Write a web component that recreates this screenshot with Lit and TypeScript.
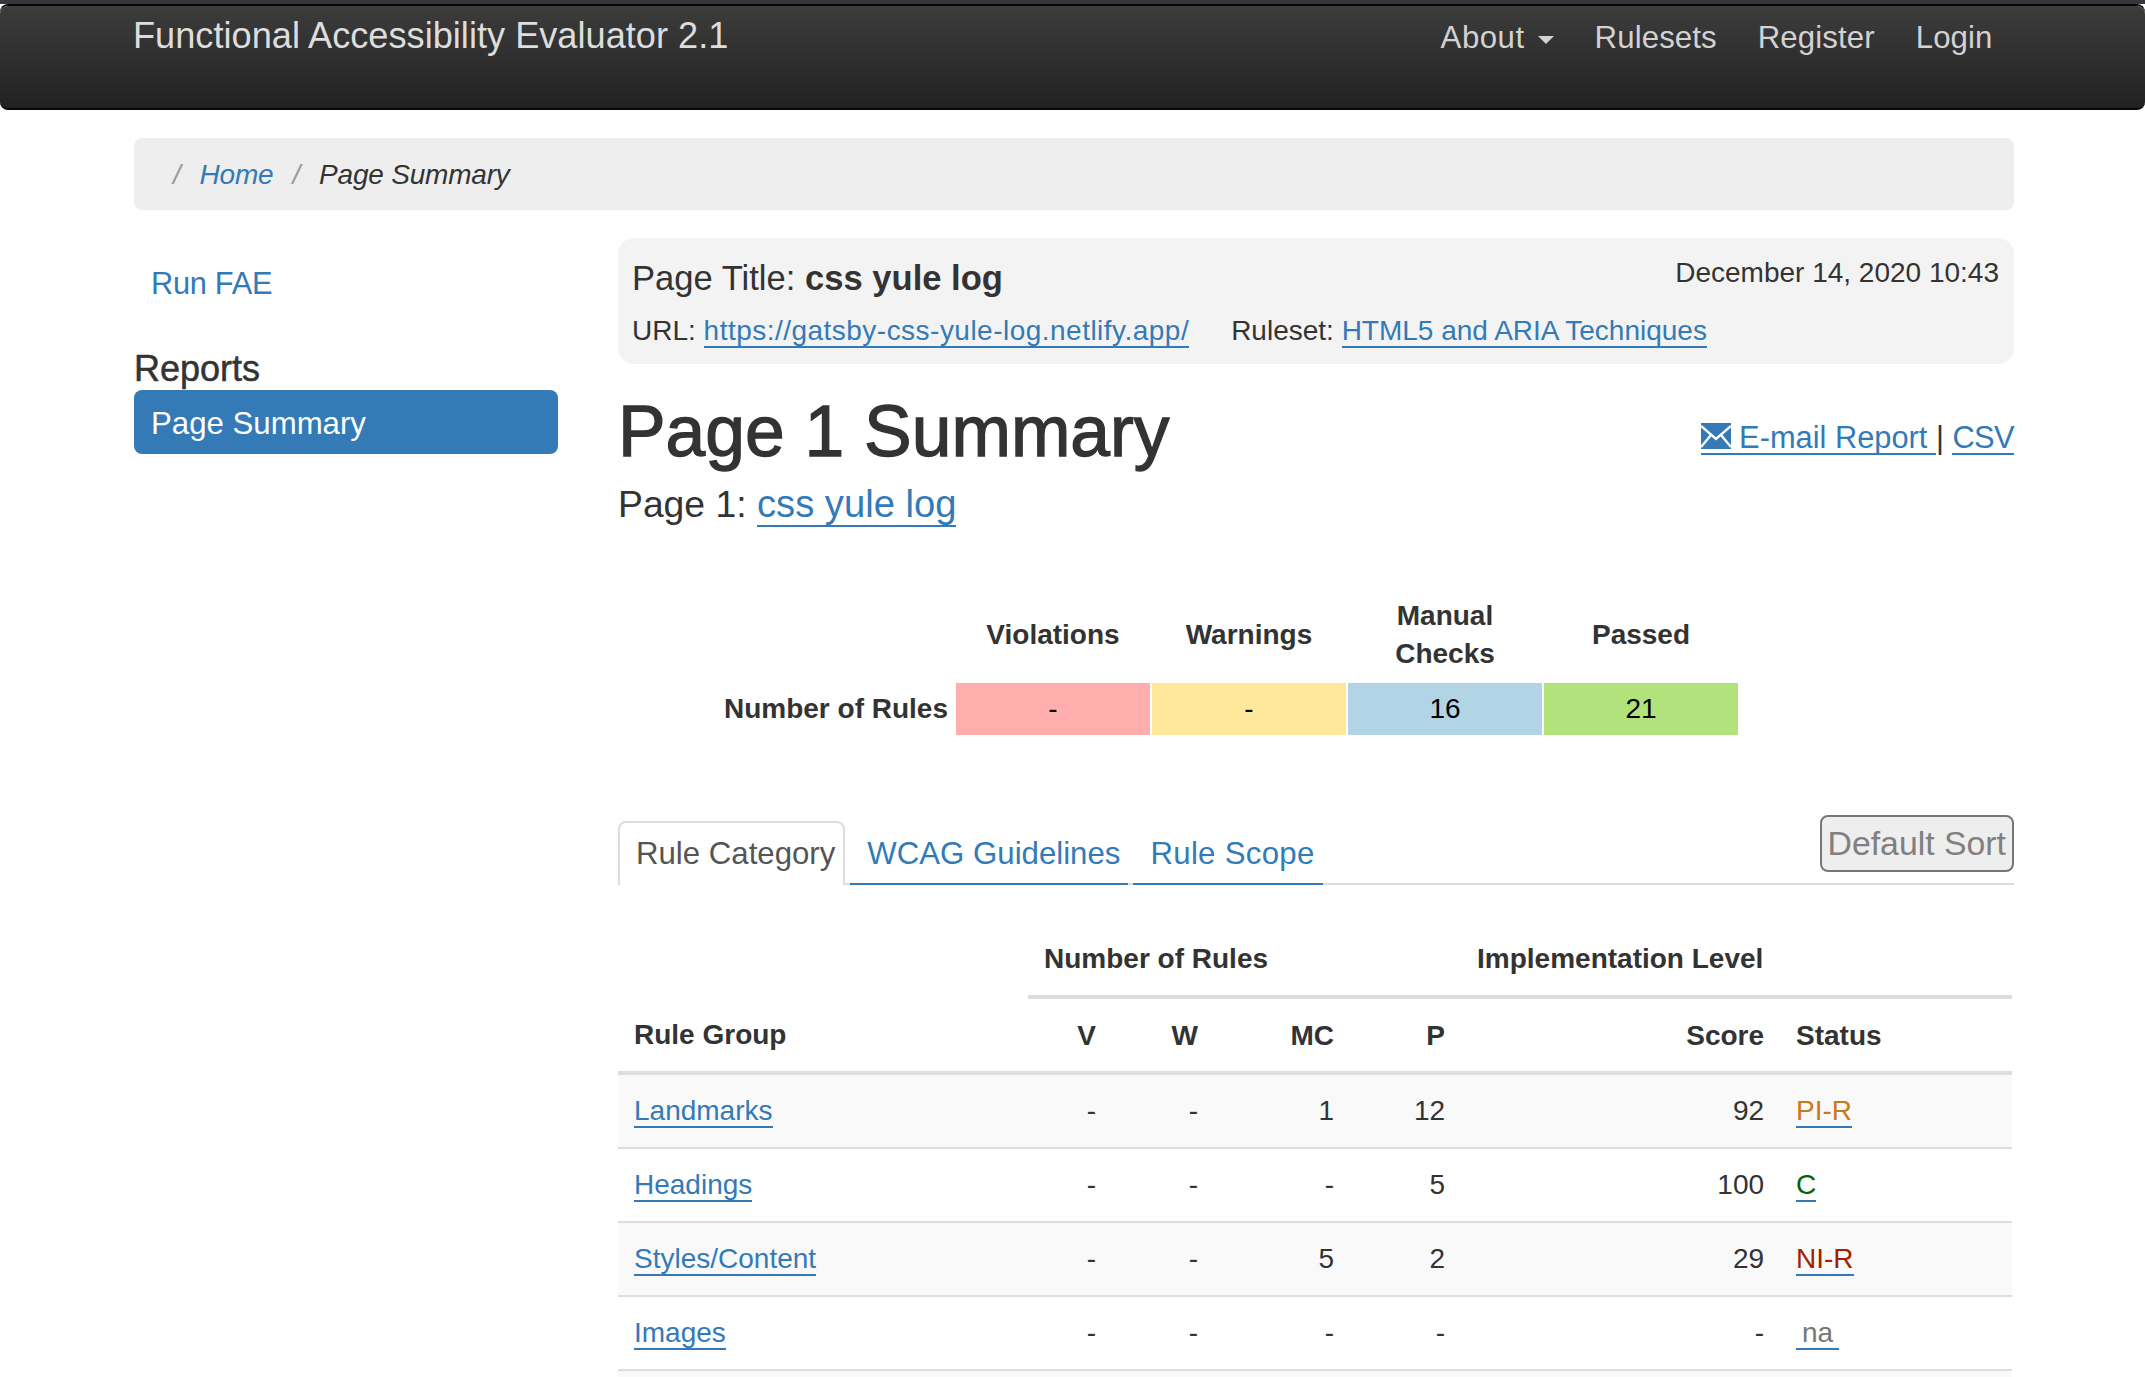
import { LitElement, html, css } from "lit";
import { customElement } from "lit/decorators.js";

const rows = [
  { name: "Landmarks", v: "-", w: "-", mc: "1", p: "12", score: "92", status: "PI-R", cls: "pi" },
  { name: "Headings", v: "-", w: "-", mc: "-", p: "5", score: "100", status: "C", cls: "c" },
  { name: "Styles/Content", v: "-", w: "-", mc: "5", p: "2", score: "29", status: "NI-R", cls: "ni" },
  { name: "Images", v: "-", w: "-", mc: "-", p: "-", score: "-", status: "na", cls: "na" },
];

@customElement("app-root")
export class AppRoot extends LitElement {
  static styles = css`
    :host {
      display: block;
      height: 1377px;
      overflow: hidden;
      background: #fff;
      font-family: "Liberation Sans", Arial, sans-serif;
      font-size: 28px;
      line-height: 40px;
      color: #333;
    }
    a { color: #337ab7; text-decoration: none; }
    .lnk { border-bottom: 2px solid #337ab7; }
    .strip { height: 4px; background: #34373c; }
    .navbar {
      height: 104px;
      box-sizing: border-box;
      margin-top: 2px;
      padding: 0 132px 0 133px;
      border-radius: 8px;
      border-bottom: 2px solid #080808;
      background: linear-gradient(#3c3c3c, #222);
      display: flex;
      align-items: flex-start;
      box-shadow: 0 -2px 0 #080808;
    }
    .brand { font-size: 36.2px; line-height: 40px; margin-top: 10px; color: #ddd; }
    .nav { margin-left: auto; display: flex; margin-top: 12px; }
    .nav a { color: #d2d2d2; font-size: 31.2px; line-height: 40px; padding: 0 20.5px; display: flex; align-items: center; letter-spacing: 0.1px; }
    .nav a.about { letter-spacing: 0.5px; }
    .caret {
      width: 0; height: 0; margin-left: 13px; margin-top: 4px;
      border-left: 8px solid transparent;
      border-right: 8px solid transparent;
      border-top: 8px solid #d2d2d2;
    }
    .page { padding: 28px 131px 0 134px; }
    .crumbs {
      height: 72px;
      border-radius: 8px;
      background: #eee;
      padding: 2px 0 0 20px;
      box-sizing: border-box;
      display: flex;
      align-items: center;
      font-style: italic;
      letter-spacing: -0.2px;
    }
    .crumbs span.item::before { content: "/"; color: #999; padding: 0 19px; }
    .columns { display: flex; margin-top: 28px; }
    .side { width: 424px; margin-right: 60px; flex: none; }
    .run { display: block; font-size: 30.8px; padding: 0 17px; margin-top: 26px; line-height: 40px; letter-spacing: -0.3px; }
    .side h2 {
      font-size: 36px; font-weight: 400; line-height: 40px; margin: 45px 0 0;
      -webkit-text-stroke: 0.5px #333;
    }
    .active {
      display: block; height: 64px; margin-top: 1px; box-sizing: border-box;
      padding: 12px 17px 0; border-radius: 8px;
      background: #337ab7; color: #fff; font-size: 31.2px; line-height: 44px;
    }
    .main { flex: 1; min-width: 0; }
    .info {
      height: 126px; box-sizing: border-box; border-radius: 16px; background: #f3f3f3;
      padding: 20px 15px 0 14px;
    }
    .info-top { display: flex; justify-content: space-between; align-items: flex-start; }
    .ptitle { font-size: 34.6px; line-height: 40px; }
    .date { line-height: 40px; margin-top: -5px; }
    .info-bottom { display: flex; margin-top: 13px; }
    .url { letter-spacing: 0.48px; }
    .ruleset { margin-left: 42px; }
    .head { display: flex; justify-content: space-between; align-items: flex-start; margin-top: 29px; }
    h1 { margin: 0; font-size: 71.4px; line-height: 76px; font-weight: 400; -webkit-text-stroke: 1.3px #333; }
    .dl { font-size: 30.8px; line-height: 40px; margin-top: 25px; display: flex; align-items: baseline; white-space: pre; }
    .dl .lnk { display: inline-block; line-height: 31px; }
    .dl svg { width: 30px; height: 26px; vertical-align: -1px; margin-right: 8px; }
    .csv { letter-spacing: -0.6px; }
    .sub { font-size: 37.3px; line-height: 46px; margin-top: 12px; }
    .sub a { font-size: 38.2px; }
    .summary {
      display: grid;
      grid-template-columns: 336px repeat(4, 194px);
      column-gap: 2px;
      margin-top: 60px;
      font-weight: 700;
    }
    .summary .sh { height: 96px; display: flex; align-items: center; justify-content: center; text-align: center; }
    .summary .sh.two { padding: 0 40px; line-height: 38px; }
    .summary .lbl { height: 52px; display: flex; align-items: center; justify-content: flex-end; padding-right: 6px; }
    .summary .val { height: 52px; display: flex; align-items: center; justify-content: center; font-weight: 400; color: #000; }
    .red { background: #ffadad; } .yel { background: #ffe89a; } .blu { background: #b2d5e6; } .grn { background: #b2e27c; }
    .tabs { display: flex; margin-top: 80px; border-bottom: 2px solid #ddd; box-sizing: border-box; height: 70px; }
    .tab { font-size: 31.2px; line-height: 40px; }
    .tab.cur {
      margin-top: 6px; margin-bottom: -2px; height: 64px; box-sizing: border-box;
      padding: 11px 8px 0 16px; border: 2px solid #ddd; border-bottom: 0; border-radius: 8px 8px 0 0;
      background: #fff; color: #555;
    }
    .tab.other {
      margin-top: 6px; margin-bottom: -2px; height: 64px; box-sizing: border-box;
      padding: 13px 8px 0 17px; border-bottom: 2px solid #337ab7; margin-left: 5px;
    }
    .tab.scope { letter-spacing: 0.3px; }
    .sort {
      margin-left: auto; height: 57px; box-sizing: border-box; padding: 0 6px;
      font: 33.8px "Liberation Sans", Arial, sans-serif; line-height: 49px;
      background: #eee; color: #808080; border: 2px solid #777; border-radius: 8px;
    }
    table { border-collapse: collapse; table-layout: fixed; width: 1394px; margin-top: 38px; }
    th, td { padding: 16px; line-height: 40px; font-size: 28px; }
    th { font-weight: 700; text-align: left; }
    .low th { padding: 17px 16px 15px; }
    .r { text-align: right; }
    .under { border-bottom: 4px solid #ddd; }
    tbody td { border-bottom: 2px solid #ddd; }
    tbody tr:nth-child(odd) td { background: #f9f9f9; }
    .pi { color: #c87a1e; } .c { color: #006400; } .ni { color: #a02000; } .na { color: #777; padding: 0 6px; }
  `;

  render() {
    return html`
      <div class="strip"></div>
      <header class="navbar">
        <div class="brand">Functional Accessibility Evaluator 2.1</div>
        <nav class="nav">
          <a class="about" href="#">About<span class="caret"></span></a>
          <a href="#">Rulesets</a>
          <a href="#">Register</a>
          <a href="#">Login</a>
        </nav>
      </header>
      <div class="page">
        <div class="crumbs">
          <span class="item"><a href="#">Home</a></span>
          <span class="item">Page Summary</span>
        </div>
        <div class="columns">
          <aside class="side">
            <a class="run" href="#">Run FAE</a>
            <h2>Reports</h2>
            <a class="active" href="#">Page Summary</a>
          </aside>
          <main class="main">
            <section class="info">
              <div class="info-top">
                <div class="ptitle">Page Title: <b>css yule log</b></div>
                <div class="date">December 14, 2020 10:43</div>
              </div>
              <div class="info-bottom">
                <div>URL: <a class="lnk url" href="#">https://gatsby-css-yule-log.netlify.app/</a></div>
                <div class="ruleset">Ruleset: <a class="lnk" href="#">HTML5 and ARIA Techniques</a></div>
              </div>
            </section>
            <div class="head">
              <h1>Page 1 Summary</h1>
              <div class="dl"><a class="lnk" href="#"><svg viewBox="0 0 30 26" aria-hidden="true"><rect width="30" height="26" fill="#337ab7"/><path d="M0 3 15 16 30 3M0 24 10 12M30 24 20 12" fill="none" stroke="#fff" stroke-width="2.4"/></svg>E-mail Report </a>| <a class="lnk csv" href="#">CSV</a></div>
            </div>
            <div class="sub">Page 1: <a class="lnk" href="#">css yule log</a></div>
            <div class="summary">
              <div></div>
              <div class="sh">Violations</div>
              <div class="sh">Warnings</div>
              <div class="sh two">Manual Checks</div>
              <div class="sh">Passed</div>
              <div class="lbl">Number of Rules</div>
              <div class="val red">-</div>
              <div class="val yel">-</div>
              <div class="val blu">16</div>
              <div class="val grn">21</div>
            </div>
            <div class="tabs">
              <div class="tab cur">Rule Category</div>
              <a class="tab other" href="#">WCAG Guidelines</a>
              <a class="tab other scope" href="#">Rule Scope</a>
              <button class="sort">Default Sort</button>
            </div>
            <table>
              <colgroup>
                <col style="width:410px" /><col style="width:84px" /><col style="width:102px" /><col style="width:136px" /><col style="width:111px" /><col style="width:319px" /><col style="width:232px" />
              </colgroup>
              <thead>
                <tr>
                  <th></th>
                  <th class="under" colspan="4">Number of Rules</th>
                  <th class="under" colspan="2">Implementation Level</th>
                </tr>
                <tr class="low">
                  <th class="under">Rule Group</th>
                  <th class="under r">V</th>
                  <th class="under r">W</th>
                  <th class="under r">MC</th>
                  <th class="under r">P</th>
                  <th class="under r">Score</th>
                  <th class="under">Status</th>
                </tr>
              </thead>
              <tbody>
                ${rows.map(
                  (r) => html`<tr>
                    <td><a class="lnk" href="#">${r.name}</a></td>
                    <td class="r">${r.v}</td>
                    <td class="r">${r.w}</td>
                    <td class="r">${r.mc}</td>
                    <td class="r">${r.p}</td>
                    <td class="r">${r.score}</td>
                    <td><a class="lnk ${r.cls}" href="#">${r.status}</a></td>
                  </tr>`
                )}
                <tr><td colspan="7">&nbsp;</td></tr>
              </tbody>
            </table>
          </main>
        </div>
      </div>
    `;
  }
}
